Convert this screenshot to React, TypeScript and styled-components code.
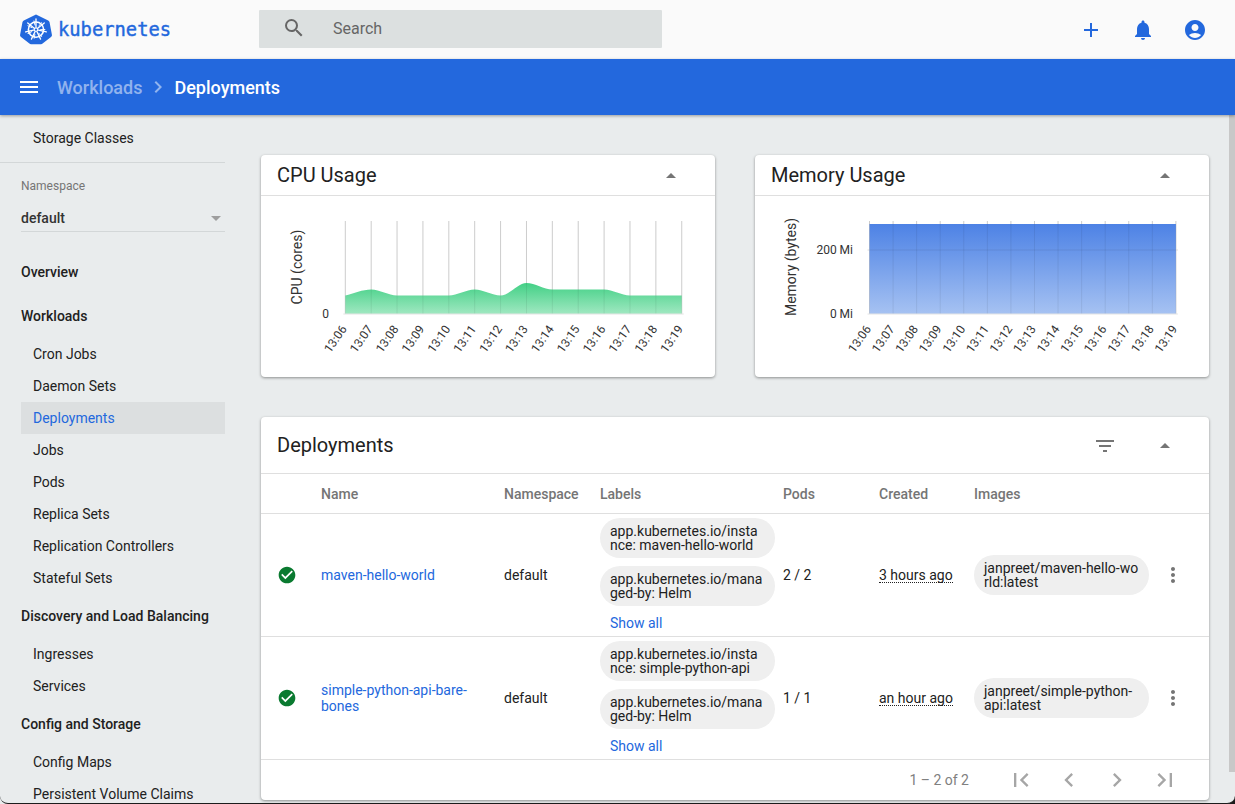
import styled, { createGlobalStyle } from 'styled-components';
import {
  MdAccountCircle,
  MdAdd,
  MdArrowDropDown,
  MdArrowDropUp,
  MdCheckCircle,
  MdChevronLeft,
  MdChevronRight,
  MdFilterList,
  MdFirstPage,
  MdLastPage,
  MdMenu,
  MdMoreVert,
  MdNotifications,
  MdSearch,
} from 'react-icons/md';

const GlobalStyle = createGlobalStyle`
  html, body {
    margin: 0;
    height: 100%;
    overflow: hidden;
    font-family: Roboto, "Liberation Sans", sans-serif;
    font-size: 14px;
    color: #212121;
  }
  html { background: linear-gradient(to right, #e9eced 50%, #1c1c1c 50%); }
  * { box-sizing: border-box; }
`;

const Page = styled.div`
  height: 804px;
  display: flex;
  flex-direction: column;
  overflow: hidden;
  background: #e9eced;
  border-bottom: 1px solid #1c1c1c;
  border-radius: 0 0 8px 8px;
`;

const TopBar = styled.header`
  height: 59px;
  flex: none;
  display: flex;
  align-items: center;
  padding: 0 28px 0 20px;
  background: #fafafa;
`;

const Brand = styled.div`
  width: 239px;
  flex: none;
  display: flex;
  align-items: center;
  gap: 6px;
  color: #2368dd;
`;

const BrandName = styled.span`
  font-family: "DejaVu Sans Mono", monospace;
  font-size: 18.8px;
  -webkit-text-stroke: 0.4px #2368dd;
`;

const SearchBox = styled.div`
  width: 403px;
  height: 38px;
  margin-top: -1px;
  display: flex;
  align-items: center;
  padding: 0 0 2px 23px;
  gap: 27px;
  background: #dce0e0;
  border-radius: 1px;
  color: #666;
  font-size: 16px;
`;

const TopActions = styled.div`
  margin-left: auto;
  display: flex;
  align-items: center;
  gap: 28px;
  color: #2368dd;
`;

const BlueBar = styled.div`
  height: 56px;
  flex: none;
  display: flex;
  align-items: center;
  padding-left: 17px;
  background: #2368dd;
  color: #fff;
  box-shadow: 0 1px 3px rgba(0, 0, 0, 0.35);
  position: relative;
  z-index: 1;
`;

const Crumb = styled.span<{ $muted?: boolean }>`
  font-size: 18px;
  font-weight: 500;
  color: ${(p) => (p.$muted ? 'rgba(255, 255, 255, 0.5)' : '#fff')};
`;

const CrumbSep = styled.span`
  display: flex;
  margin: 0 4px;
  color: rgba(255, 255, 255, 0.5);
`;

const MenuButton = styled.span`
  display: flex;
  margin-right: 16px;
`;

const Body = styled.div`
  flex: 1;
  min-height: 0;
  display: flex;
`;

const Sidebar = styled.nav`
  width: 241px;
  flex: none;
  overflow: hidden;
  padding-right: 16px;
`;

const SideList = styled.div`
  padding: 7px 0 0 0;
`;

const Divider = styled.div`
  height: 1px;
  background: #d3d7d8;
  margin-top: 8px;
`;

const NamespaceBlock = styled.div`
  margin: 0 0 0 21px;
  padding-top: 17px;
`;

const NamespaceLabel = styled.div`
  font-size: 12px;
  line-height: 13px;
  color: #757575;
`;

const NamespaceSelect = styled.div`
  margin-top: 10px;
  height: 29px;
  display: flex;
  align-items: center;
  justify-content: space-between;
  border-bottom: 1px solid #d3d7d8;
  padding-top: 2px;
  font-weight: 500;
  color: #333;
  svg { color: #9e9e9e; margin-right: -3px; }
`;

const SectionTitle = styled.div<{ $gap: number }>`
  height: 20px;
  line-height: 20px;
  margin: ${(p) => p.$gap}px 0 12px 21px;
  font-weight: 500;
  color: #212121;
`;

const SideItem = styled.div<{ $active?: boolean }>`
  height: 32px;
  line-height: 32px;
  margin-left: 21px;
  padding-left: 12px;
  background: ${(p) => (p.$active ? '#dcdfe0' : 'transparent')};
  color: ${(p) => (p.$active ? '#2368dd' : '#212121')};
`;

const Main = styled.main`
  flex: 1;
  min-width: 0;
  position: relative;
  padding: 40px 26px 0 20px;
  overflow: hidden;
`;

const ScrollThumb = styled.div`
  position: absolute;
  top: 0;
  right: 0;
  width: 6px;
  height: 657px;
  background: #c8c8c8;
`;

const ChartRow = styled.div`
  display: grid;
  grid-template-columns: 454px 454px;
  gap: 40px;
`;

const Card = styled.section`
  background: #fff;
  border-radius: 4px;
  box-shadow: 0 1px 3px rgba(0, 0, 0, 0.4);
`;

const CardHeader = styled.div<{ $tall?: boolean }>`
  height: ${(p) => (p.$tall ? 57 : 41)}px;
  display: flex;
  align-items: center;
  padding: 0 32px 0 16px;
  border-bottom: 1px solid #dfdfdf;
  font-size: 20px;
  color: #212121;
`;

const CardTools = styled.div`
  margin: 1px 0 0 auto;
  display: flex;
  align-items: center;
  gap: 36px;
  color: #757575;
`;

const ChartBody = styled.div`
  height: 181px;
  svg { display: block; }
  text {
    font-family: Roboto, "Liberation Sans", sans-serif;
    font-size: 12px;
    fill: #333;
  }
`;

const TableCard = styled(Card)`
  margin-top: 40px;
  height: 383px;
`;

const gridCols = '60px 183px 96px 183px 96px 95px 183px 1fr';

const HeadRow = styled.div`
  height: 40px;
  display: grid;
  grid-template-columns: ${gridCols};
  align-items: center;
  border-bottom: 1px solid #dfdfdf;
  font-size: 14px;
  font-weight: 500;
  color: #757575;
`;

const Row = styled.div`
  height: 123px;
  display: grid;
  grid-template-columns: ${gridCols};
  align-items: center;
  border-bottom: 1px solid #dfdfdf;
  color: #212121;
`;

const StatusCell = styled.div`
  display: flex;
  justify-content: center;
  padding-right: 8px;
  color: #0a7a30;
`;

const NameLink = styled.a`
  color: #2368dd;
  line-height: 16px;
  padding-right: 24px;
`;

const Chips = styled.div`
  display: flex;
  flex-direction: column;
  gap: 8px;
`;

const Chip = styled.div`
  width: 175px;
  min-height: 40px;
  padding: 6px 10px;
  background: #efefef;
  border-radius: 20px;
  line-height: 14px;
  word-break: break-all;
`;

const ShowAll = styled.a`
  height: 18px;
  margin-left: 10px;
  color: #2368dd;
  line-height: 18px;
`;

const Age = styled.span`
  justify-self: start;
  line-height: 14px;
  border-bottom: 1px dotted #212121;
`;

const MenuCell = styled.div`
  display: flex;
  color: #757575;
  margin-left: 4px;
`;

const Paginator = styled.div`
  height: 40px;
  display: flex;
  align-items: center;
  justify-content: flex-end;
  padding-right: 30px;
  color: #808080;
`;

const PageInfo = styled.span`
  margin-right: 38px;
`;

const PageIcons = styled.div`
  display: flex;
  gap: 20px;
  color: #a6a6a6;
`;

const times = ['13:06', '13:07', '13:08', '13:09', '13:10', '13:11', '13:12', '13:13', '13:14', '13:15', '13:16', '13:17', '13:18', '13:19'];

// same shape d3's curveMonotoneX gives
function monotonePath(pts: [number, number][]) {
  const n = pts.length;
  const slopes: number[] = [];
  for (let i = 0; i < n - 1; i++) slopes.push((pts[i + 1][1] - pts[i][1]) / (pts[i + 1][0] - pts[i][0]));
  const tan = pts.map((_, i) => {
    if (i === 0) return slopes[0];
    if (i === n - 1) return slopes[n - 2];
    if (slopes[i - 1] * slopes[i] <= 0) return 0;
    return (2 * slopes[i - 1] * slopes[i]) / (slopes[i - 1] + slopes[i]);
  });
  let d = `M${pts[0][0]},${pts[0][1]}`;
  for (let i = 0; i < n - 1; i++) {
    const h = (pts[i + 1][0] - pts[i][0]) / 3;
    d += `C${pts[i][0] + h},${pts[i][1] + tan[i] * h} ${pts[i + 1][0] - h},${pts[i + 1][1] - tan[i + 1] * h} ${pts[i + 1][0]},${pts[i + 1][1]}`;
  }
  return d;
}

type ChartProps = {
  id: string;
  color: [string, string];
  left: number;
  step: number;
  values: number[];
  yTitle: string;
  yTitleX: number;
  ticks: { y: number; label: string }[];
  tickX: number;
  gridY?: number;
};

function UsageChart({ id, color, left, step, values, yTitle, yTitleX, ticks, tickX, gridY }: ChartProps) {
  const base = 118;
  const top = 25;
  const xs = times.map((_, i) => left + i * step);
  const pts = values.map((v, i) => [xs[i], v] as [number, number]);
  const right = xs[xs.length - 1];
  return (
    <ChartBody>
      <svg width="454" height="181">
        <defs>
          <linearGradient id={id} x1="0" y1="0" x2="0" y2="1">
            <stop offset="0%" stopColor={color[0]} />
            <stop offset="100%" stopColor={color[1]} />
          </linearGradient>
        </defs>
        {xs.map((x) => (
          <line key={x} x1={x} x2={x} y1={top} y2={base} stroke="#dcdcdc" />
        ))}
        {gridY && <line x1={left - 2} x2={right + 2} y1={gridY} y2={gridY} stroke="#dcdcdc" />}
        <path d={`${monotonePath(pts)}L${right},${base}L${left},${base}Z`} fill={`url(#${id})`} />
        {xs.map((x) => (
          <line key={x} x1={x} x2={x} y1={top} y2={base} stroke="rgba(0,0,0,0.07)" />
        ))}
        {gridY && <line x1={left} x2={right} y1={gridY} y2={gridY} stroke="rgba(0,0,0,0.07)" />}
        <line x1={left - 2} x2={right + 2} y1={base} y2={base} stroke="#e4e4e4" />
        {ticks.map((t) => (
          <text key={t.label} x={tickX} y={t.y + 4} textAnchor="end">
            {t.label}
          </text>
        ))}
        <text transform={`translate(${yTitleX},71) rotate(-90)`} textAnchor="middle" style={{ fontSize: 14 }}>
          {yTitle}
        </text>
        {times.map((t, i) => (
          <text key={t} transform={`translate(${xs[i] + 2},133) rotate(-55)`} textAnchor="end">
            {t}
          </text>
        ))}
      </svg>
    </ChartBody>
  );
}

const cpu = [99.5, 93.5, 99.5, 99.5, 99.5, 93.5, 99.5, 87, 93.5, 93.5, 93.5, 99.5, 99.5, 99.5];
const mem = times.map(() => 28);

function KubeLogo() {
  const spokes = [0, 51.4, 102.8, 154.3, 205.7, 257.1, 308.6];
  return (
    <svg width="32" height="31" viewBox="0 0 32 31">
      <path
        d="M16 0.6 L28.2 6.5 Q29.2 7 29.5 8.1 L32 21.2 L32 21.2 Q31.8 22.2 31 23 L22.6 29.6 Q21.9 30.2 21 30.2 L11 30.2 Q10.1 30.2 9.4 29.6 L1 23 Q0.2 22.2 0 21.2 L2.5 8.1 Q2.8 7 3.8 6.5 Z"
        fill="#2368dd"
      />
      <g stroke="#fff" fill="none" strokeLinecap="round">
        <circle cx="16" cy="15.6" r="7.6" strokeWidth="1.6" />
        <circle cx="16" cy="15.6" r="1.8" strokeWidth="1.2" />
        {spokes.map((a) => (
          <g key={a} transform={`rotate(${a} 16 15.6)`}>
            <line x1="16" y1="5" x2="16" y2="13" strokeWidth="1.3" />
            <line x1="18.9" y1="12" x2="21.5" y2="8.6" strokeWidth="0.9" />
          </g>
        ))}
      </g>
    </svg>
  );
}

const labelsOne = ['app.kubernetes.io/instance: maven-hello-world', 'app.kubernetes.io/managed-by: Helm'];
const labelsTwo = ['app.kubernetes.io/instance: simple-python-api', 'app.kubernetes.io/managed-by: Helm'];

const deployments = [
  { name: 'maven-hello-world', labels: labelsOne, pods: '2 / 2', age: '3 hours ago', image: 'janpreet/maven-hello-world:latest' },
  { name: 'simple-python-api-bare-bones', labels: labelsTwo, pods: '1 / 1', age: 'an hour ago', image: 'janpreet/simple-python-api:latest' },
];

const workloads = ['Cron Jobs', 'Daemon Sets', 'Deployments', 'Jobs', 'Pods', 'Replica Sets', 'Replication Controllers', 'Stateful Sets'];

export default function App() {
  return (
    <>
      <GlobalStyle />
      <Page>
        <TopBar>
          <Brand>
            <KubeLogo />
            <BrandName>kubernetes</BrandName>
          </Brand>
          <SearchBox>
            <MdSearch size={24} />
            <span>Search</span>
          </SearchBox>
          <TopActions>
            <MdAdd size={24} />
            <MdNotifications size={24} />
            <MdAccountCircle size={24} />
          </TopActions>
        </TopBar>
        <BlueBar>
          <MenuButton>
            <MdMenu size={24} />
          </MenuButton>
          <Crumb $muted>Workloads</Crumb>
          <CrumbSep>
            <MdChevronRight size={24} />
          </CrumbSep>
          <Crumb>Deployments</Crumb>
        </BlueBar>
        <Body>
          <Sidebar>
            <SideList>
              <SideItem>Storage Classes</SideItem>
              <Divider />
              <NamespaceBlock>
                <NamespaceLabel>Namespace</NamespaceLabel>
                <NamespaceSelect>
                  default
                  <MdArrowDropDown size={24} />
                </NamespaceSelect>
              </NamespaceBlock>
              <SectionTitle $gap={30}>Overview</SectionTitle>
              <SectionTitle $gap={24}>Workloads</SectionTitle>
              {workloads.map((w) => (
                <SideItem key={w} $active={w === 'Deployments'}>
                  {w}
                </SideItem>
              ))}
              <SectionTitle $gap={12}>Discovery and Load Balancing</SectionTitle>
              <SideItem>Ingresses</SideItem>
              <SideItem>Services</SideItem>
              <SectionTitle $gap={12}>Config and Storage</SectionTitle>
              <SideItem>Config Maps</SideItem>
              <SideItem>Persistent Volume Claims</SideItem>
            </SideList>
          </Sidebar>
          <Main>
            <ChartRow>
              <Card>
                <CardHeader>
                  CPU Usage
                  <CardTools>
                    <MdArrowDropUp size={24} />
                  </CardTools>
                </CardHeader>
                <UsageChart
                  id="cpuFill"
                  color={['#43d086', '#a0e8c1']}
                  left={84.3}
                  step={25.88}
                  values={cpu}
                  yTitle="CPU (cores)"
                  yTitleX={41}
                  ticks={[{ y: 118, label: '0' }]}
                  tickX={68}
                />
              </Card>
              <Card>
                <CardHeader>
                  Memory Usage
                  <CardTools>
                    <MdArrowDropUp size={24} />
                  </CardTools>
                </CardHeader>
                <UsageChart
                  id="memFill"
                  color={['#4d82e5', '#a6c2f2']}
                  left={114.5}
                  step={23.57}
                  values={mem}
                  yTitle="Memory (bytes)"
                  yTitleX={41}
                  ticks={[
                    { y: 54, label: '200 Mi' },
                    { y: 118, label: '0 Mi' },
                  ]}
                  tickX={98}
                  gridY={54}
                />
              </Card>
            </ChartRow>
            <TableCard>
              <CardHeader $tall>
                Deployments
                <CardTools>
                  <MdFilterList size={24} />
                  <MdArrowDropUp size={24} />
                </CardTools>
              </CardHeader>
              <HeadRow>
                <span />
                <span>Name</span>
                <span>Namespace</span>
                <span>Labels</span>
                <span>Pods</span>
                <span>Created</span>
                <span>Images</span>
              </HeadRow>
              {deployments.map((d) => (
                <Row key={d.name}>
                  <StatusCell>
                    <MdCheckCircle size={20} />
                  </StatusCell>
                  <NameLink>{d.name}</NameLink>
                  <span>default</span>
                  <Chips>
                    {d.labels.map((l) => (
                      <Chip key={l}>{l}</Chip>
                    ))}
                    <ShowAll>Show all</ShowAll>
                  </Chips>
                  <span>{d.pods}</span>
                  <Age>{d.age}</Age>
                  <Chip>{d.image}</Chip>
                  <MenuCell>
                    <MdMoreVert size={24} />
                  </MenuCell>
                </Row>
              ))}
              <Paginator>
                <PageInfo>1 – 2 of 2</PageInfo>
                <PageIcons>
                  <MdFirstPage size={28} />
                  <MdChevronLeft size={28} />
                  <MdChevronRight size={28} />
                  <MdLastPage size={28} />
                </PageIcons>
              </Paginator>
            </TableCard>
            <ScrollThumb />
          </Main>
        </Body>
      </Page>
    </>
  );
}
